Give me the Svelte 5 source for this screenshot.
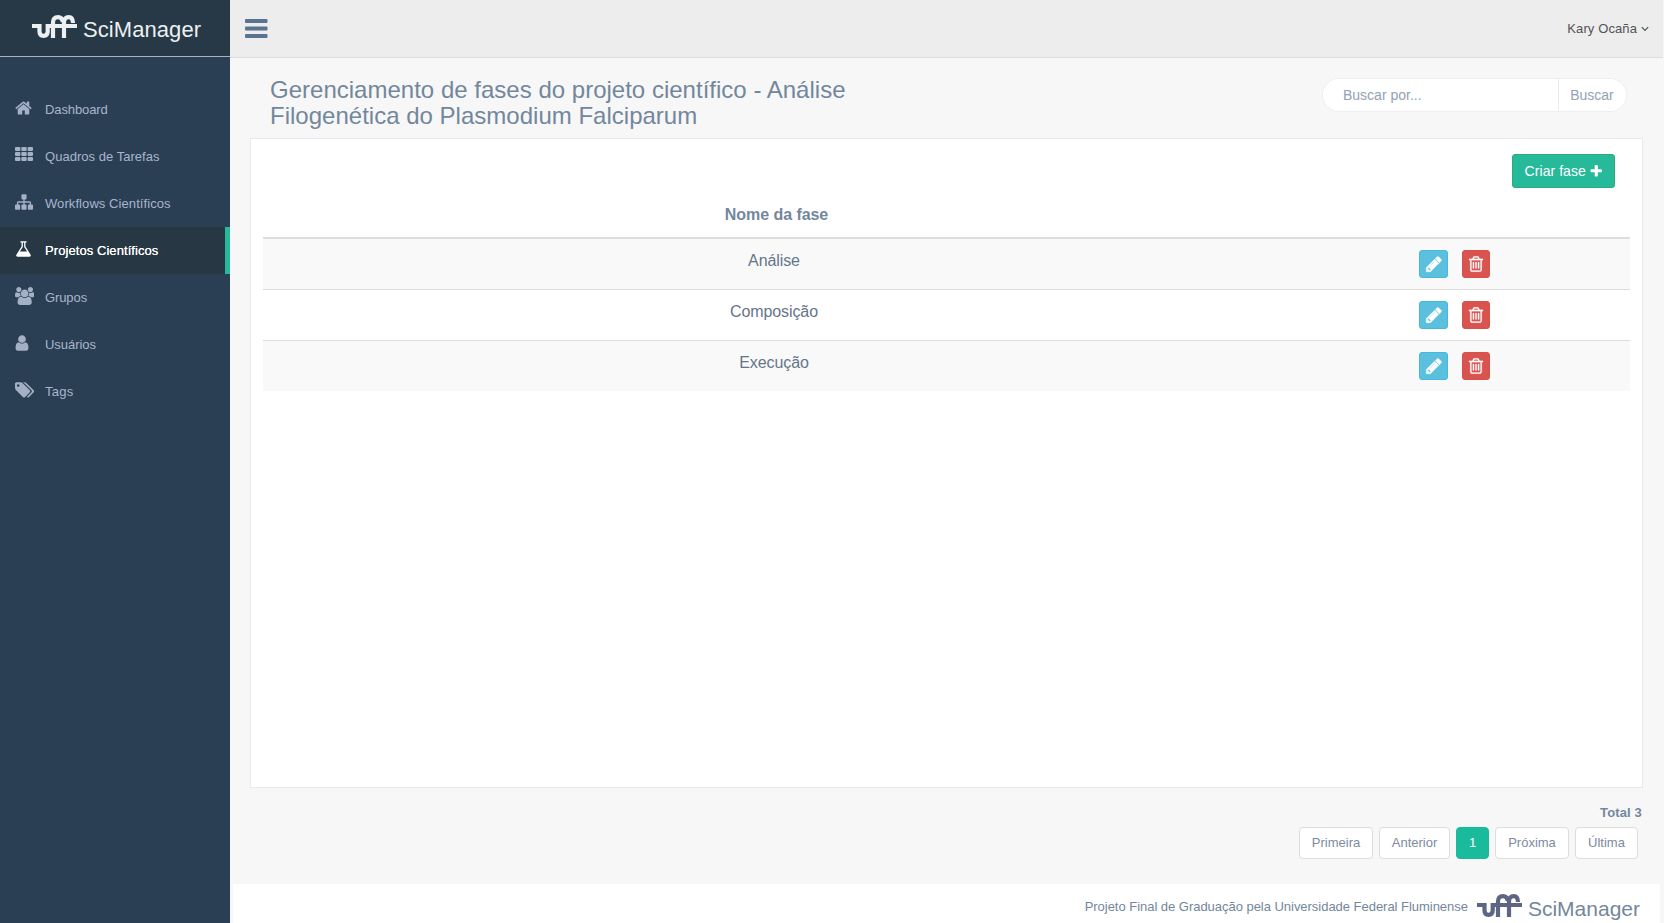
<script>
  const nav = [
    { label: 'Dashboard', track: -0.1, box: '64 0 1664 1792', w: 17, d: 'M1472 992v480q0 26-19 45t-45 19h-384v-384h-256v384h-384q-26 0-45-19t-19-45v-480q0-1 .5-3t.5-3l575-474 575 474q1 2 1 6zm223-69l-62 74q-8 9-21 11h-3q-13 0-21-7l-692-577-692 577q-12 8-24 7-13-2-21-11l-62-74q-8-10-7-23.5t11-21.5l719-599q32-26 76-26t76 26l244 204v-195q0-14 9-23t23-9h192q14 0 23 9t9 23v408l219 182q10 8 11 21.5t-7 23.5z' },
    { label: 'Quadros de Tarefas', track: 0.03, box: '0 0 18 18', w: 18, d: 'M1 1h3.400a1 1 0 0 1 1 1v2a1 1 0 0 1-1 1H1a1 1 0 0 1-1-1V2a1 1 0 0 1 1-1zM7.300 1h3.400a1 1 0 0 1 1 1v2a1 1 0 0 1-1 1H7.300a1 1 0 0 1-1-1V2a1 1 0 0 1 1-1zM13.600 1H17a1 1 0 0 1 1 1v2a1 1 0 0 1-1 1h-3.400a1 1 0 0 1-1-1V2a1 1 0 0 1 1-1zM1 6h3.400a1 1 0 0 1 1 1v2a1 1 0 0 1-1 1H1a1 1 0 0 1-1-1V7a1 1 0 0 1 1-1zM7.300 6h3.400a1 1 0 0 1 1 1v2a1 1 0 0 1-1 1H7.300a1 1 0 0 1-1-1V7a1 1 0 0 1 1-1zM13.600 6H17a1 1 0 0 1 1 1v2a1 1 0 0 1-1 1h-3.400a1 1 0 0 1-1-1V7a1 1 0 0 1 1-1zM1 11h3.400a1 1 0 0 1 1 1v2a1 1 0 0 1-1 1H1a1 1 0 0 1-1-1V12a1 1 0 0 1 1-1zM7.300 11h3.400a1 1 0 0 1 1 1v2a1 1 0 0 1-1 1H7.300a1 1 0 0 1-1-1V12a1 1 0 0 1 1-1zM13.600 11H17a1 1 0 0 1 1 1v2a1 1 0 0 1-1 1h-3.400a1 1 0 0 1-1-1V12a1 1 0 0 1 1-1z' },
    { label: 'Workflows Científicos', track: 0.08, box: '0 0 1792 1792', w: 18, d: 'M1792 1248v320q0 40-28 68t-68 28h-320q-40 0-68-28t-28-68v-320q0-40 28-68t68-28h96v-192h-512v192h96q40 0 68 28t28 68v320q0 40-28 68t-68 28h-320q-40 0-68-28t-28-68v-320q0-40 28-68t68-28h96v-192h-512v192h96q40 0 68 28t28 68v320q0 40-28 68t-68 28h-320q-40 0-68-28t-28-68v-320q0-40 28-68t68-28h96v-192q0-52 38-90t90-38h512v-192h-96q-40 0-68-28t-28-68v-320q0-40 28-68t68-28h320q40 0 68 28t28 68v320q0 40-28 68t-68 28h-96v192h512q52 0 90 38t38 90v192h96q40 0 68 28t28 68z' },
    { label: 'Projetos Científicos', track: 0.07, box: '64 0 1664 1792', w: 17, active: true, d: 'M1591 1448q56 89 21.500 152.500t-140.500 63.500h-1152q-106 0-140.500-63.500t21.500-152.500l503-793v-399h-64q-26 0-45-19t-19-45 19-45 45-19h512q26 0 45 19t19 45-19 45-45 19h-64v399zm-779-725l-272 429h712l-272-429-20-31v-436h-128v436z' },
    { label: 'Grupos', track: -0.1, box: '-64 0 1920 1792', w: 19.3, d: 'M529 896q-162 5-265 128h-134q-82 0-138-40.500t-56-118.500q0-353 124-353 6 0 43.500 21t97.500 42.500 119 21.500q67 0 133-23-5 37-5 66 0 139 81 256zm1071 637q0 120-73 189.500t-194 69.500h-874q-121 0-194-69.500t-73-189.500q0-53 3.500-103.500t14-109 26.500-108.500 43-97.500 62-81 85.500-53.500 111.500-20q10 0 43 21.500t73 48 107 48 135 21.500 135-21.500 107-48 73-48 43-21.500q61 0 111.500 20t85.500 53.500 62 81 43 97.500 26.500 108.500 14 109 3.500 103.500zm-1024-1277q0 106-75 181t-181 75-181-75-75-181 75-181 181-75 181 75 75 181zm704 384q0 159-112.500 271.500t-271.500 112.500-271.500-112.500-112.500-271.500 112.500-271.500 271.500-112.500 271.500 112.500 112.500 271.500zm576 225q0 78-56 118.500t-138 40.500h-134q-103-123-265-128 81-117 81-256 0-29-5-66 66 23 133 23 59 0 119-21.500t97.500-42.500 43.500-21q124 0 124 353zm-128-609q0 106-75 181t-181 75-181-75-75-181 75-181 181-75 181 75 75 181z' },
    { label: 'Usuários', track: -0.05, box: '256 0 1280 1792', w: 14, d: 'M1536 1399q0 109-62.500 187t-150.500 78h-854q-88 0-150.500-78t-62.500-187q0-85 8.500-160.500t31.500-152 58.500-131 94-89 134.500-34.500q131 128 313 128t313-128q76 0 134.500 34.500t94 89 58.500 131 31.500 152 8.500 160.500zm-256-887q0 159-112.500 271.500t-271.500 112.500-271.500-112.500-112.500-271.500 112.500-271.500 271.500-112.500 271.500 112.500 112.500 271.500z' },
    { label: 'Tags', track: 0.3, box: '-64 0 1920 1792', w: 19.3, d: 'M384 448q0-53-37.500-90.500t-90.500-37.500-90.500 37.500-37.500 90.500 37.500 90.500 90.500 37.500 90.500-37.500 37.500-90.500zm1067 576q0 53-37 90l-491 492q-39 37-91 37-53 0-90-37l-715-716q-38-37-64.500-101t-26.500-117v-416q0-52 38-90t90-38h416q53 0 117 26.500t102 64.500l715 714q37 39 37 91zm384 0q0 53-37 90l-491 492q-39 37-91 37-36 0-59-14t-53-45l470-470q37-37 37-90 0-52-37-91l-715-714q-38-38-102-64.500t-117-26.500h224q53 0 117 26.500t102 64.500l715 714q37 39 37 91z' }
  ];
  const phases = ['Análise', 'Composição', 'Execução'];
  const pages = [
    { label: 'Primeira', w: 74 },
    { label: 'Anterior', w: 71 },
    { label: '1', w: 33, active: true },
    { label: 'Próxima', w: 74 },
    { label: 'Última', w: 63 }
  ];
</script>

{#snippet uff()}
  <svg class="uff" viewBox="0 0 45 23" width="45" height="23" fill="none" stroke="currentColor" stroke-width="4.200">
    <path d="M0 11H7.500V16.500Q7.500 20.800 11.500 20.800Q15.700 20.800 15.700 16.500V11H45" />
    <path d="M21 23V7.500Q21 2.200 26 2.200Q30.200 2.200 30.800 7" />
    <path d="M32 23V7.500Q32 2.200 36.800 2.200Q40.800 2.200 41 8" />
  </svg>
{/snippet}

<div class="page">
  <aside>
    <div class="brand">{@render uff()}<span>SciManager</span></div>
    <nav>
      {#each nav as item}
        <a class:active={item.active} href="#top">
          <i><svg viewBox={item.box} width={item.w} height="18" fill="currentColor"><path d={item.d} /></svg></i>
          <span style="letter-spacing: {item.track}px">{item.label}</span>
        </a>
      {/each}
    </nav>
  </aside>
  <div class="main">
    <header>
      <svg width="22.500" height="19" viewBox="0 0 22.5 19" fill="currentColor"><rect width="22.500" height="4" rx="1" /><rect y="7.500" width="22.500" height="4" rx="1" /><rect y="15" width="22.500" height="4" rx="1" /></svg>
      <div class="account"><span>Kary Ocaña</span><svg width="8" height="6" viewBox="0 0 8 6" fill="none" stroke="currentColor" stroke-width="1.200"><path d="M.8 1.200 4 4.400 7.200 1.200" /></svg></div>
    </header>
    <div class="heading">
      <h3>Gerenciamento de fases do projeto científico - Análise<br />Filogenética do Plasmodium Falciparum</h3>
      <div class="search"><input placeholder="Buscar por..." aria-label="Buscar por" /><button>Buscar</button></div>
    </div>
    <section class="panel">
      <div class="tools">
        <button class="create"><span>Criar fase</span><svg width="14.500" height="14.500" viewBox="0 0 1792 1792" fill="currentColor"><path d="M1600 736v192q0 40-28 68t-68 28h-416v416q0 40-28 68t-68 28h-192q-40 0-68-28t-28-68v-416h-416q-40 0-68-28t-28-68v-192q0-40 28-68t68-28h416v-416q0-40 28-68t68-28h192q40 0 68 28t28 68v416h416q40 0 68 28t28 68z" /></svg></button>
      </div>
      <div class="row head"><b>Nome da fase</b></div>
      {#each phases as phase}
        <div class="row">
          <span class="name">{phase}</span>
          <div class="actions">
            <button class="edit" aria-label="Editar"><svg width="18" height="18" viewBox="0 0 1792 1792" fill="currentColor" stroke="currentColor" stroke-width="40"><path d="M491 1536l91-91-235-235-91 91v107h128v128h107zm523-928q0-22-22-22-10 0-17 7l-542 542q-7 7-7 17 0 22 22 22 10 0 17-7l542-542q7-7 7-17zm-54-192l416 416-832 832h-416v-416zm683 96q0 53-37 90l-166 166-416-416 166-165q36-38 90-38 53 0 91 38l235 234q37 39 37 91z" /></svg></button>
            <button class="delete" aria-label="Excluir"><svg width="18" height="18" viewBox="0 0 1792 1792" fill="currentColor" stroke="currentColor" stroke-width="20"><path d="M704 736v576q0 14-9 23t-23 9h-64q-14 0-23-9t-9-23v-576q0-14 9-23t23-9h64q14 0 23 9t9 23zm256 0v576q0 14-9 23t-23 9h-64q-14 0-23-9t-9-23v-576q0-14 9-23t23-9h64q14 0 23 9t9 23zm256 0v576q0 14-9 23t-23 9h-64q-14 0-23-9t-9-23v-576q0-14 9-23t23-9h64q14 0 23 9t9 23zm128 724v-948h-896v948q0 22 7 40.500t14.500 27 10.500 8.500h832q3 0 10.500-8.500t14.500-27 7-40.500zm-672-1076h448l-48-117q-7-9-17-11h-317q-10 2-17 11zm928 32v64q0 14-9 23t-23 9h-96v948q0 83-47 143.500t-113 60.500h-832q-66 0-113-58.500t-47-141.500v-952h-96q-14 0-23-9t-9-23v-64q0-14 9-23t23-9h309l70-167q15-37 54-63t79-26h320q40 0 79 26t54 63l70 167h309q14 0 23 9t9 23z" /></svg></button>
          </div>
        </div>
      {/each}
    </section>
    <div class="pager">
      <b>Total 3</b>
      <div class="pages">
        {#each pages as p}
          <button class:active={p.active} style="width: {p.w}px">{p.label}</button>
        {/each}
      </div>
    </div>
    <footer><span>Projeto Final de Graduação pela Universidade Federal Fluminense</span>{@render uff()}<strong>SciManager</strong></footer>
  </div>
</div>

<style>
  :global(body) { margin: 0; overflow: hidden; }
  .page, .page * { box-sizing: border-box; }
  .page { display: flex; width: 1664px; height: 923px; background: #f7f7f7; color: #73879c; font: 13px/18px "Liberation Sans", Arial, sans-serif; }
  svg { display: block; flex: none; }
  button { font: inherit; padding: 0; white-space: nowrap; }
  aside { width: 230px; flex: none; background: #2a3f54; }
  .brand { height: 57px; display: flex; align-items: flex-start; padding: 15px 0 0 32px; gap: 6px; background: #273947; border-bottom: 1px solid #a3b5c1; color: #ecf0f1; font-size: 22px; line-height: 30px; letter-spacing: .07px; }
  nav { padding-top: 29px; }
  nav a { display: flex; height: 47px; padding: 13px 0 0 15px; color: #a9b5cc; text-decoration: none; }
  nav i { width: 30px; color: #a4b0c6; }
  nav span { line-height: 22px; }
  nav a.active { background: #283744; border-right: 5px solid #26b99a; color: #fff; text-shadow: 0 0 .4px #fff; }
  nav a.active i { color: #fff; }
  .main { flex: 1; display: flex; flex-direction: column; min-width: 0; }
  .main > * { flex-shrink: 0; }
  header { height: 58px; margin-right: 1px; display: flex; justify-content: space-between; padding: 19px 14px 0 15px; background: #ededed; border-bottom: 1px solid #d9dee4; color: #5a738e; }
  .account { display: flex; gap: 4px; color: #515356; line-height: 20px; letter-spacing: .1px; }
  .account svg { margin-top: 7px; }
  .heading { height: 80px; display: flex; justify-content: space-between; padding: 19px 37px 0 40px; }
  h3 { margin: 0; font-weight: 400; font-size: 24px; line-height: 26px; white-space: nowrap; letter-spacing: .01px; }
  .search { display: flex; width: 305px; height: 34px; margin-top: 1px; border: 1px solid #eee; border-radius: 17px; background: #fff; overflow: hidden; font-size: 14px; }
  input { width: 236px; border: 0; border-right: 1px solid #e9edf0; padding: 0 0 0 20px; font: inherit; outline: 0; background: #fff; }
  input::placeholder { color: #93a2b2; opacity: 1; }
  .search button { flex: 1; border: 0; background: #fff; color: #93a2b2; padding: 0 1px 0 0; }
  .panel { height: 650px; margin: 0 21px 0 20px; padding: 0 12px; background: #fff; border: 1px solid #e6e9ed; }
  .tools { height: 51px; display: flex; justify-content: flex-end; padding: 15px 15px 0 0; }
  .create { width: 103px; height: 34px; display: flex; justify-content: center; align-items: center; gap: 3px; padding-left: 1px; border: 1px solid #2dab74; border-radius: 3px; background: #26b99a; color: #fff; font-size: 14px; letter-spacing: .06px; }
  .row { display: flex; height: 51px; border-top: 1px solid #ddd; font-size: 16px; line-height: 22px; color: #667589; }
  .row:nth-child(odd) { background: #f9f9f9; }
  .row.head { height: 49px; padding: 14px 0 0; justify-content: center; border-top: 0; border-bottom: 2px solid #ddd; background: #fff; color: #73879c; }
  .head b { width: 1027px; margin-right: auto; text-align: center; letter-spacing: -.05px; }
  .head + .row { height: 50px; border-top: 0; }
  .name { width: 1022px; text-align: center; padding-top: 11px; letter-spacing: -.1px; }
  .actions { display: flex; gap: 14px; padding: 11px 0 0 134px; }
  .actions button { height: 28px; display: flex; align-items: center; justify-content: center; border-radius: 3px; color: #fff; padding-bottom: 1px; }
  .edit { width: 29px; background: #5bc0de; border: 1px solid #46b8da; }
  .delete { width: 28px; background: #d9534f; border: 1px solid #d9504b; }
  .pager { height: 96px; padding: 16px 22px 0 0; display: flex; flex-direction: column; align-items: flex-end; }
  .pager b { letter-spacing: .15px; }
  .pages { display: flex; gap: 6px; margin: 5px 4px 0 0; }
  .pages button { height: 32px; border: 1px solid #ddd; border-radius: 4px; background: #fff; color: #7d8a9f; padding-bottom: 1px; }
  .pages .active { background: #1abb9c; border-color: #1abb9c; color: #fff; }
  footer { flex: 1 0 0; min-height: 0; margin: 0 4px 0 3px; display: flex; align-items: flex-start; justify-content: flex-end; padding: 10px 20px 0 0; background: #fff; }
  footer span { line-height: 26px; letter-spacing: -.03px; }
  footer .uff { color: #5d6582; margin: 0 6px 0 9px; }
  strong { font-weight: 400; font-size: 21px; line-height: 30px; }
</style>
